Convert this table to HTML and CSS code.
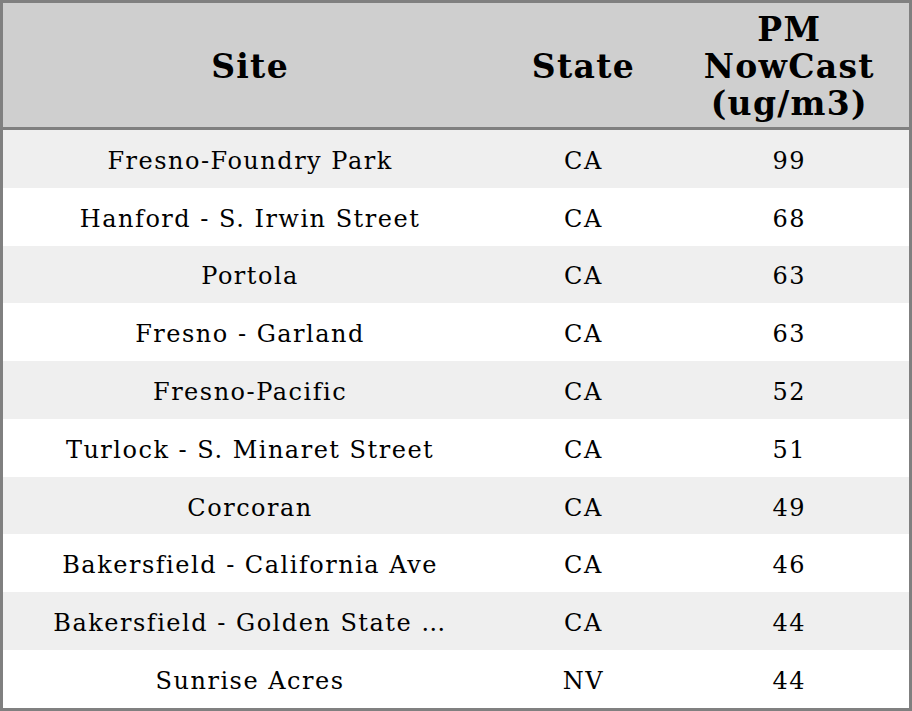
FILE: index.html
```html
<!DOCTYPE html>
<html>
<head>
<meta charset="utf-8">
<link rel="stylesheet" href="styles.css">
</head>
<body>
<table class="grid">
  <colgroup>
    <col class="c-site"><col class="c-state"><col class="c-pm">
  </colgroup>
  <thead>
    <tr><th>Site</th><th>State</th><th>PM<br>NowCast<br>(ug/m3)</th></tr>
  </thead>
  <tbody>
    <tr><td>Fresno-Foundry Park</td><td>CA</td><td>99</td></tr>
    <tr><td>Hanford - S. Irwin Street</td><td>CA</td><td>68</td></tr>
    <tr><td>Portola</td><td>CA</td><td>63</td></tr>
    <tr><td>Fresno - Garland</td><td>CA</td><td>63</td></tr>
    <tr><td>Fresno-Pacific</td><td>CA</td><td>52</td></tr>
    <tr><td>Turlock - S. Minaret Street</td><td>CA</td><td>51</td></tr>
    <tr><td>Corcoran</td><td>CA</td><td>49</td></tr>
    <tr><td>Bakersfield - California Ave</td><td>CA</td><td>46</td></tr>
    <tr><td>Bakersfield - Golden State …</td><td>CA</td><td>44</td></tr>
    <tr><td>Sunrise Acres</td><td>NV</td><td>44</td></tr>
  </tbody>
</table>
</body>
</html>
```
FILE: styles.css
```css
html, body {
  margin: 0;
  padding: 0;
  background: #ffffff;
}
.grid {
  width: 912px;
  border-collapse: collapse;
  border: 3px solid #808080;
  font-family: "DejaVu Serif", serif;
  color: #000;
  table-layout: fixed;
}
.c-site { width: 494px; }
.c-state { width: 172px; }
.c-pm { width: 240px; }
.grid th {
  background: #cfcfcf;
  font-size: 33px;
  font-weight: bold;
  letter-spacing: 1.3px;
  line-height: 37px;
  padding: 8px 0 5px;
  height: 112px;
  box-sizing: border-box;
  border-bottom: 3px solid #808080;
  text-align: center;
  vertical-align: middle;
}
.grid td {
  font-size: 24px;
  letter-spacing: 1.5px;
  line-height: 28px;
  padding: 16.9px 0 12.9px;
  text-align: center;
  vertical-align: middle;
  white-space: nowrap;
}
.grid tbody tr:nth-child(odd) td {
  background: #efefef;
}
```
